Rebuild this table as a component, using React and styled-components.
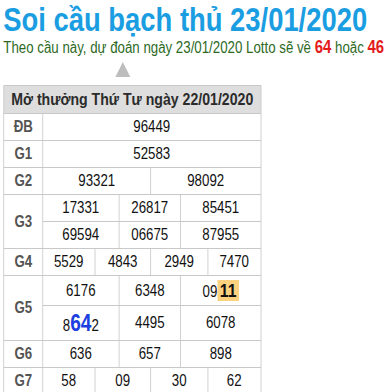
import React from "react";
import styled, { createGlobalStyle } from "styled-components";

// the source page is shown squeezed sideways, so the whole sheet is laid out
// at its natural width and narrowed once with scaleX
const GlobalStyle = createGlobalStyle`
  html, body {
    overflow: hidden;
  }
  body {
    margin: 0;
    background: #fff;
    font-family: "Liberation Sans", Arial, sans-serif;
  }
`;

const Page = styled.div`
  width: 466px;
  padding: 0 4px;
  box-sizing: border-box;
  transform: scaleX(0.83);
  transform-origin: 0 0;
`;

const Title = styled.h1`
  margin: 0;
  padding-top: 2px;
  font-size: 33px;
  line-height: 36px;
  font-weight: bold;
  color: #1a9de1;
  white-space: nowrap;
`;

const Predict = styled.p`
  margin: 0;
  font-size: 16px;
  line-height: 20px;
  color: #2d6a1f;
  white-space: nowrap;
`;

const Hit = styled.b`
  color: #e31b1b;
  font-size: 18px;
  line-height: 1;
`;

const Pointer = styled.div`
  width: 0;
  height: 0;
  margin: 4px 0 8px 135px;
  border-left: 9.6px solid transparent;
  border-right: 9.6px solid transparent;
  border-bottom: 15px solid #bdbdbd;
`;

const Board = styled.div`
  display: grid;
  grid-template-columns: 46px 61.6px 28px 37.5px 35.2px 31.5px 62.8px;
  gap: 1px;
  padding: 1px;
  width: max-content;
  background: #c8c8c8;
`;

const Caption = styled.div`
  grid-column: 1 / -1;
  padding: 4px 0;
  background: #dedede;
  color: #2b2b2b;
  font-size: 17px;
  line-height: 19px;
  font-weight: bold;
  text-align: center;
`;

const Label = styled.div`
  grid-row: span ${(p) => p.$rows};
  display: flex;
  align-items: center;
  justify-content: center;
  background: #fff;
  color: #555;
  font-size: 16px;
  font-weight: bold;
`;

const Cell = styled.div`
  grid-column: span ${(p) => p.$span};
  display: flex;
  align-items: center;
  justify-content: center;
  padding: 4px 2px;
  background: #fff;
  color: #111;
  font-size: 16px;
  line-height: 18px;
`;

const Mark = styled.b`
  display: inline-block;
  padding: 1px 3px;
  background: #fdd27f;
  color: #111;
  font-size: 19px;
  line-height: 19px;
`;

const Lotto = styled.b`
  color: #1c3fe0;
  font-size: 23px;
  line-height: 26px;
`;

const spans = { 1: [6], 2: [3, 3], 3: [2, 2, 2], 4: [1, 2, 2, 1] };

const prizes = [
  { label: "ĐB", lines: [["96449"]] },
  { label: "G1", lines: [["52583"]] },
  { label: "G2", lines: [["93321", "98092"]] },
  {
    label: "G3",
    lines: [
      ["17331", "26817", "85451"],
      ["69594", "06675", "87955"],
    ],
  },
  { label: "G4", lines: [["5529", "4843", "2949", "7470"]] },
  {
    label: "G5",
    lines: [
      [
        "6176",
        "6348",
        <span>
          09<Mark>11</Mark>
        </span>,
      ],
      [
        <span>
          8<Lotto>64</Lotto>2
        </span>,
        "4495",
        "6078",
      ],
    ],
  },
  { label: "G6", lines: [["636", "657", "898"]] },
  { label: "G7", lines: [["58", "09", "30", "62"]] },
];

const App = () => {
  return (
    <Page>
      <GlobalStyle />
      <Title>Soi cầu bạch thủ 23/01/2020</Title>
      <Predict>
        Theo cầu này, dự đoán ngày 23/01/2020 Lotto sẽ về <Hit>64</Hit> hoặc{" "}
        <Hit>46</Hit>
      </Predict>
      <Pointer />
      <Board>
        <Caption>Mở thưởng Thứ Tư ngày 22/01/2020</Caption>
        {prizes.map((prize) => (
          <React.Fragment key={prize.label}>
            <Label $rows={prize.lines.length}>{prize.label}</Label>
            {prize.lines.map((line) =>
              line.map((value, i) => (
                <Cell key={i} $span={spans[line.length][i]}>
                  {value}
                </Cell>
              ))
            )}
          </React.Fragment>
        ))}
      </Board>
    </Page>
  );
};

export default App;
